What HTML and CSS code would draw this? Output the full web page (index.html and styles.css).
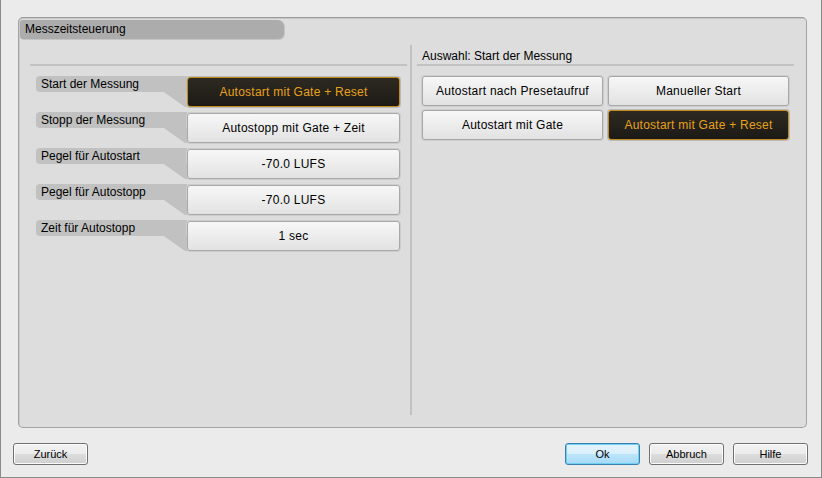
FILE: index.html
```html
<!DOCTYPE html>
<html>
<head>
<meta charset="utf-8">
<link rel="stylesheet" href="styles.css">
</head>
<body>
<div class="window">
  <div class="panel">
    <div class="tab">Messzeitsteuerung</div>
    <div class="body">
      <div class="col">
        <div class="col-head"></div>
        <div class="rows">
          <div class="row">
            <div class="lbl"><div class="lbl-bar">Start der Messung</div></div>
            <div class="btn sel wide">Autostart mit Gate + Reset</div>
          </div>
          <div class="row">
            <div class="lbl"><div class="lbl-bar">Stopp der Messung</div></div>
            <div class="btn wide">Autostopp mit Gate + Zeit</div>
          </div>
          <div class="row">
            <div class="lbl"><div class="lbl-bar">Pegel für Autostart</div></div>
            <div class="btn wide">-70.0 LUFS</div>
          </div>
          <div class="row">
            <div class="lbl"><div class="lbl-bar">Pegel für Autostopp</div></div>
            <div class="btn wide">-70.0 LUFS</div>
          </div>
          <div class="row">
            <div class="lbl"><div class="lbl-bar">Zeit für Autostopp</div></div>
            <div class="btn wide">1 sec</div>
          </div>
        </div>
      </div>
      <div class="divider"></div>
      <div class="col">
        <div class="col-head">Auswahl: Start der Messung</div>
        <div class="choices">
          <div class="btn">Autostart nach Presetaufruf</div>
          <div class="btn">Manueller Start</div>
          <div class="btn">Autostart mit Gate</div>
          <div class="btn sel">Autostart mit Gate + Reset</div>
        </div>
      </div>
    </div>
  </div>
  <div class="footer">
    <div class="wbtn">Zurück</div>
    <div class="spacer"></div>
    <div class="wbtn focus">Ok</div>
    <div class="wbtn">Abbruch</div>
    <div class="wbtn">Hilfe</div>
  </div>
</div>
</body>
</html>
```
FILE: styles.css
```css
html, body {
  margin: 0;
  padding: 0;
  background: #ebebeb;
}
body {
  font-family: "Liberation Sans", Arial, sans-serif;
  font-size: 12px;
  color: #000;
}
.window {
  box-sizing: border-box;
  width: 822px;
  height: 478px;
  background: #ebebeb;
  border-left: 1px solid #8a8a8a;
  border-right: 1px solid #8a8a8a;
  border-bottom: 1px solid #8a8a8a;
  padding: 17px 13px 0 12px;
  display: flex;
  flex-direction: column;
}
.panel {
  box-sizing: border-box;
  height: 411px;
  margin: 0 1px 0 5px;
  border: 1px solid #a2a2a2;
  border-top-color: #9a9a9a;
  border-radius: 5px;
  box-shadow: inset 1px 1px 0 #c9c9c9;
  background: #dddddd;
  display: flex;
  flex-direction: column;
}
.tab {
  box-sizing: border-box;
  width: 264px;
  height: 19px;
  margin: 2px 0 0 1px;
  padding-left: 5px;
  line-height: 19px;
  background: #acacac;
  border-radius: 3px 6px 6px 3px;
  box-shadow: 1px 1px 0 #c4c4c4;
}
.body {
  flex: 1;
  display: flex;
  margin: 6px 0 12px 0;
  padding: 0 11px;
}
.col {
  width: 377px;
  display: flex;
  flex-direction: column;
}
.col-head {
  box-sizing: border-box;
  height: 21px;
  padding: 4px 0 0 5px;
  line-height: 15px;
  border-bottom: 2px solid #c2c2c2;
}
.divider {
  width: 2px;
  margin: 0 5px 0 3px;
  background: #c2c2c2;
}
.rows {
  margin-top: 10px;
  display: flex;
  flex-direction: column;
  gap: 5px;
}
.row {
  display: flex;
  height: 31px;
  padding-left: 6px;
}
.lbl {
  width: 151px;
  height: 31px;
}
.lbl-bar {
  height: 16px;
  line-height: 16px;
  padding-left: 5px;
  background: #c1c1c1;
  border-radius: 4px 0 0 4px;
}
.lbl::after {
  content: "";
  display: block;
  height: 15px;
  background: #c1c1c1;
  clip-path: polygon(128px 0, 151px 0, 151px 15px, 149px 15px);
}
.btn {
  box-sizing: border-box;
  height: 30px;
  display: flex;
  align-items: center;
  justify-content: center;
  border: 1px solid #a8a8a8;
  border-radius: 3px;
  background: linear-gradient(#f7f7f7, #e2e2e2);
  box-shadow: 0 0 0 1px #cdcdcd;
  letter-spacing: 0.25px;
  white-space: nowrap;
}
.btn.wide {
  width: 213px;
  margin-top: 1px;
}
.btn.sel {
  background: linear-gradient(#2e2a22, #1c1a16);
  border-color: #c38c1d;
  box-shadow: 0 0 0 1px #b9b9b9;
  color: #e8a11a;
}
.choices {
  margin-top: 10px;
  padding-left: 5px;
  display: grid;
  grid-template-columns: 181px 181px;
  grid-auto-rows: 30px;
  column-gap: 5px;
  row-gap: 4px;
}
.footer {
  display: flex;
  margin-top: 15px;
  gap: 9px;
}
.spacer {
  flex: 1;
}
.wbtn {
  box-sizing: border-box;
  width: 75px;
  height: 22px;
  border: 1px solid #707070;
  border-radius: 3px;
  background: linear-gradient(#f2f2f2 0%, #ebebeb 50%, #dddddd 50%, #cfcfcf 100%);
  box-shadow: inset 0 0 0 1px #fbfbfb;
  font-size: 11px;
  line-height: 20px;
  text-align: center;
}
.wbtn.focus {
  border-color: #3c7fb1;
  background: linear-gradient(#e5f4fc 0%, #d9effb 50%, #bde5fb 50%, #a7d9f5 100%);
  box-shadow: inset 0 0 0 1px #6fd0f0;
}
```
